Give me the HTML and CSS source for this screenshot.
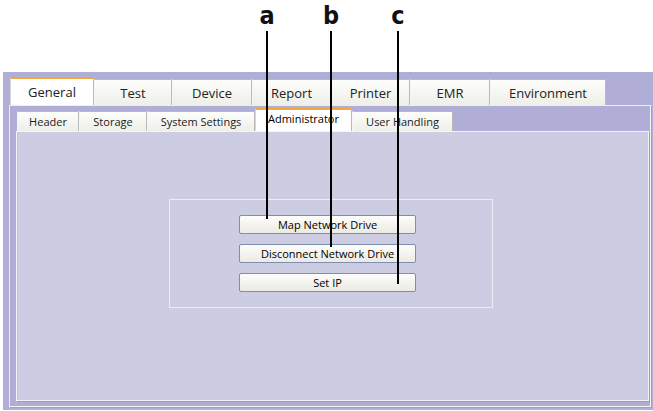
FILE: index.html
```html
<!DOCTYPE html>
<html lang="en">
<head>
  <meta charset="UTF-8" />
  <title>Settings - Administrator</title>
  <link rel="stylesheet" href="styles.css">
</head>
<body>
  <div class="window">
    <div class="tabs">
      <div class="tab active">General</div>
      <div class="tab">Test</div>
      <div class="tab">Device</div>
      <div class="tab">Report</div>
      <div class="tab">Printer</div>
      <div class="tab">EMR</div>
      <div class="tab">Environment</div>
    </div>

    <div class="panel">
      <div class="subtabs">
        <div class="subtab">Header</div>
        <div class="subtab">Storage</div>
        <div class="subtab">System Settings</div>
        <div class="subtab active">Administrator</div>
        <div class="subtab">User Handling</div>
      </div>

      <div class="content">
        <div class="frame">
          <button class="btn">Map Network Drive</button>
          <button class="btn">Disconnect Network Drive</button>
          <button class="btn">Set IP</button>
        </div>
      </div>
    </div>
  </div>

  <!-- callout letters over the screenshot -->
  <div class="callout callout-a"><span class="letter">a</span><span class="line"></span></div>
  <div class="callout callout-b"><span class="letter">b</span><span class="line"></span></div>
  <div class="callout callout-c"><span class="letter">c</span><span class="line"></span></div>
</body>
</html>
```

FILE: styles.css
```css
* { box-sizing: border-box; }
body { margin: 0; background: #fff; font-family: "Open Sans", "DejaVu Sans", sans-serif; color: #1a1a1a; }

.window { margin: 72px 0 0 3px; height: 338px; padding: 5px 0 0 6px; background: #b0aed6; }

.tabs { display: flex; align-items: flex-end; height: 28px; margin-left: 1px; }
.tab { height: 26px; display: flex; align-items: center; justify-content: center; font-size: 13px; color: #222; background: linear-gradient(#fdfdfb, #efefe9); border: 1px solid #b9b9b9; border-left-color: #f6f6f6; border-bottom: none; width: 80px; }
.tab:nth-child(1) { width: 84px; }
.tab:nth-child(2) { width: 78px; }
.tab:nth-child(4), .tab:nth-child(5) { width: 79px; }
.tab:nth-child(7) { width: 116px; }
.tab.active { height: 28px; background: #fff; border-top: 2px solid #f2a93b; border-left-color: #d6d6d6; }

.panel { width: 643px; height: 303px; border: 1px solid; border-color: #ededf0 #a5a5a0 #a5a5a0 #ededf0; box-shadow: inset -1px -1px 0 #f4f4f4; padding-top: 2px; }

.subtabs { display: flex; align-items: flex-end; height: 23px; margin-left: 7px; }
.subtab { height: 20px; display: flex; align-items: center; justify-content: center; font-size: 11px; background: linear-gradient(#fdfdfb, #efefe9); border: 1px solid #b9b9b9; border-left-color: #f6f6f6; border-bottom: none; }
.subtab:nth-child(1) { width: 62px; }
.subtab:nth-child(2) { width: 68px; }
.subtab:nth-child(3) { width: 108px; }
.subtab:nth-child(4) { width: 97px; }
.subtab:nth-child(5) { width: 101px; }
.subtab.active { height: 23px; background: #fff; border-top: 2px solid #f2a93b; border-left-color: #d6d6d6; font-weight: 500; color: #000; align-items: flex-start; padding-top: 1px; }

.content { width: 634px; height: 271px; margin-left: 6px; background: #cccce2; border: 1px solid; border-color: #f4f4f6 #9f9f98 #9f9f98 #f4f4f6; box-shadow: inset -1px -1px 0 #f2f2f2, inset 1px 0 0 #c4c4cc; overflow: hidden; }

.frame { width: 324px; height: 109px; margin: 67px 0 0 152px; border: 1px solid #ececf5; padding: 15px 0 0 69px; display: flex; flex-direction: column; gap: 10px; }

.btn { width: 177px; height: 19px; padding: 0; font-family: "Open Sans", "DejaVu Sans", sans-serif; font-size: 11px; font-weight: 500; color: #000; background: linear-gradient(#fdfdfb, #ebeae3); border: 1px solid #7d8eaf; border-radius: 2px; cursor: pointer; }

.callout { position: absolute; top: 3px; width: 20px; display: flex; flex-direction: column; align-items: center; }
.letter { font-family: "DejaVu Sans Condensed", "DejaVu Sans", sans-serif; font-weight: bold; font-size: 25px; line-height: 25px; color: #111; }
.line { width: 2px; margin-top: 3px; background: #000; }
.callout-a { left: 257px; }
.callout-a .line { height: 188px; }
.callout-b { left: 321px; }
.callout-b .line { height: 216px; }
.callout-c { left: 388px; }
.callout-c .line { height: 253px; }
```
